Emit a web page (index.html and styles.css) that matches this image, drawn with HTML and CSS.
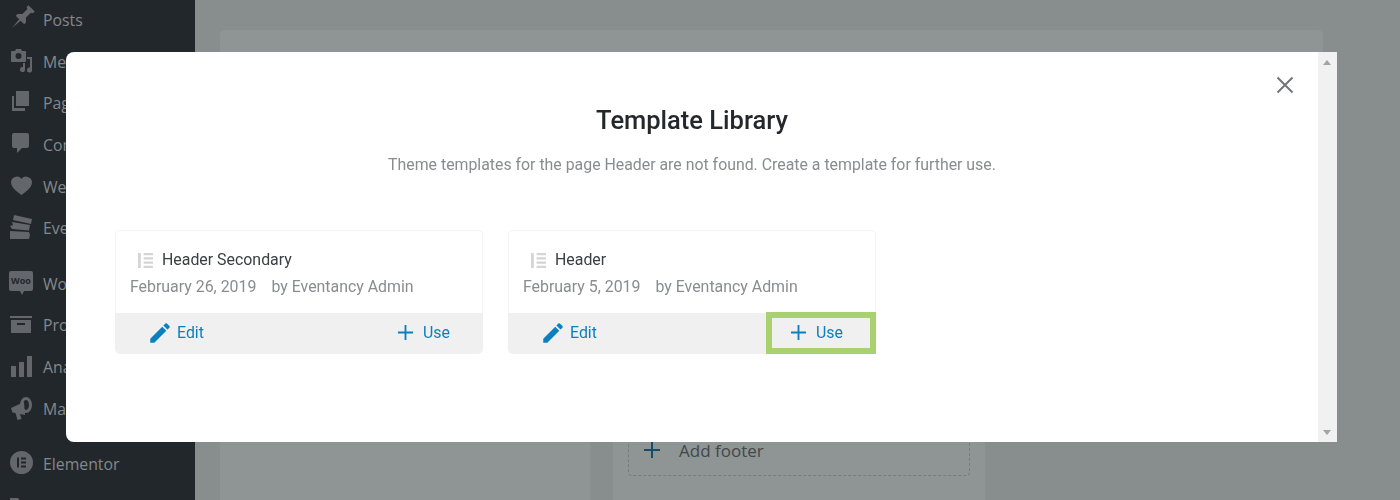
FILE: index.html
```html
<!DOCTYPE html>
<html lang="en">
<head>
  <meta charset="UTF-8">
  <title>Template Library</title>
  <link rel="stylesheet" href="styles.css">
</head>
<body>
  <div class="admin">
    <nav class="side-menu">
      <div class="menu-group">
        <div class="menu-item">
          <svg class="menu-icon" viewBox="0 0 24 24"><path transform="translate(0 -1) rotate(45 12 12)" d="M7.500 -3h9v2.500l-2 1v7l3.500 3.500v2.500h-5l-1 11-1-11h-5v-2.500l3.500-3.500v-7l-2-1z"/></svg>
          <span>Posts</span>
        </div>
        <div class="menu-item">
          <svg class="menu-icon" viewBox="0 0 24 24"><path fill-rule="evenodd" d="M3 1h3l1-2h5l1 2h3a1 1 0 0 1 1 1v9a1 1 0 0 1-1 1H3a1 1 0 0 1-1-1V2a1 1 0 0 1 1-1zm6.500 2a3 3 0 1 0 0 6 3 3 0 0 0 0-6z"/><path d="M18 7h5v13a2.500 2.500 0 1 1-2-2.400V9h-3zM14 13h2v6.500a2.500 2.500 0 1 1-2-2.400z"/></svg>
          <span>Media</span>
        </div>
        <div class="menu-item">
          <svg class="menu-icon" viewBox="0 0 24 24"><path d="M7 0h13v15H7z"/><path d="M3 5h2v12h11v3H3z"/></svg>
          <span>Pages</span>
        </div>
        <div class="menu-item">
          <svg class="menu-icon" viewBox="0 0 24 24"><path d="M5 0h13a2 2 0 0 1 2 2v11a2 2 0 0 1-2 2h-5l-5 5v-5H5a2 2 0 0 1-2-2V2a2 2 0 0 1 2-2z"/></svg>
          <span>Comments</span>
        </div>
        <div class="menu-item">
          <svg class="menu-icon" viewBox="0 0 24 24"><path d="M12.500 20C7 16 2 12.500 2 7a6 6 0 0 1 10.500-3.300A6 6 0 0 1 23 7c0 5.500-5 9-10.500 13z"/></svg>
          <span>Wedding</span>
        </div>
        <div class="menu-item">
          <svg class="menu-icon" viewBox="0 0 24 24"><path d="M5 -1l18 4-1 5-18-4zM3 6l18 3-1 5.500-17-1.500-2-3 3-1zM1 15l19 1 1 3-1 4H1z"/></svg>
          <span>Events</span>
        </div>
      </div>
      <div class="menu-group">
        <div class="menu-item">
          <svg class="menu-icon" viewBox="0 0 24 24"><path d="M2 -1h20a2 2 0 0 1 2 2v16a2 2 0 0 1-2 2h-7l-2 4-2-4H2a2 2 0 0 1-2-2V1a2 2 0 0 1 2-2z"/><text class="woo-text" x="12" y="12" text-anchor="middle">Woo</text></svg>
          <span>WooCommerce</span>
        </div>
        <div class="menu-item">
          <svg class="menu-icon" viewBox="0 0 24 24"><path d="M1 3h22v2H1zM2 7h20v13H2zm6 3v2h8v-2z" fill-rule="evenodd"/></svg>
          <span>Products</span>
        </div>
        <div class="menu-item">
          <svg class="menu-icon" viewBox="0 0 24 24"><path d="M2 11h5v11H2zM10 7h5v15h-5zM18 1h5v21h-5z"/></svg>
          <span>Analytics</span>
        </div>
        <div class="menu-item">
          <svg class="menu-icon" viewBox="0 0 24 24"><path d="M2 11l13-6 1 13-5-1 1.500 5-4 1-2-7-3-.5z"/><path fill-rule="evenodd" d="M17 0a6 8 0 1 1 0 16 6 8 0 0 1 0-16zm0 3a3 5 0 1 0 0 10 3 5 0 0 0 0-10z"/></svg>
          <span>Marketing</span>
        </div>
      </div>
      <div class="menu-group">
        <div class="menu-item">
          <svg class="menu-icon" viewBox="0 0 24 24"><path fill-rule="evenodd" d="M12.500 -1a11.500 11.500 0 1 1 0 23 11.500 11.500 0 0 1 0-23zM8 5.500v10h2v-10zm4 0v2h5v-2zm0 4v2h5v-2zm0 4v2h5v-2z"/></svg>
          <span>Elementor</span>
        </div>
        <div class="menu-item">
          <svg class="menu-icon" viewBox="0 0 24 24"><path d="M1 4h8l2 3h12v14H1z"/></svg>
          <span>Templates</span>
        </div>
      </div>
    </nav>

    <main class="content">
      <div class="top-panel"></div>
      <div class="builder-row">
        <div class="builder-col"></div>
        <div class="builder-col">
          <div class="add-box">
            <svg class="add-plus" viewBox="0 0 16 16"><path d="M7 0h2v7h7v2H9v7H7V9H0V7h7z"/></svg>
            <span>Add footer</span>
          </div>
        </div>
      </div>
    </main>
  </div>

  <div class="overlay"></div>

  <div class="modal">
    <div class="modal-body">
      <svg class="close-icon" viewBox="0 0 18 18"><path d="M1.500 1.500l15 15M16.500 1.500l-15 15"/></svg>
      <h1 class="modal-title">Template Library</h1>
      <p class="modal-text">Theme templates for the page Header are not found. Create a template for further use.</p>

      <div class="template-list">
        <div class="template-card">
          <div class="card-info">
            <div class="card-name">
              <svg class="doc-icon" viewBox="0 0 16 16"><path d="M0 0h3v16H0zM6 0h10v2.500H6zM6 4.500h10V7H6zM6 9h10v2.500H6zM6 13.500h10V16H6z"/></svg>
              <span>Header Secondary</span>
            </div>
            <div class="card-meta"><span>February 26, 2019</span><span>by Eventancy Admin</span></div>
          </div>
          <div class="card-actions">
            <a class="card-btn">
              <svg class="pencil-icon" viewBox="0 0 24 24"><path d="M3 17.250V21h3.750L17.810 9.940l-3.750-3.750L3 17.250zM20.710 7.040a1 1 0 0 0 0-1.410l-2.340-2.340a1 1 0 0 0-1.410 0l-1.830 1.830 3.750 3.750 1.830-1.830z"/></svg>
              Edit
            </a>
            <a class="card-btn">
              <svg class="plus-icon" viewBox="0 0 16 16"><path d="M7 0h2v7h7v2H9v7H7V9H0V7h7z"/></svg>
              Use
            </a>
          </div>
        </div>

        <div class="template-card">
          <div class="card-info">
            <div class="card-name">
              <svg class="doc-icon" viewBox="0 0 16 16"><path d="M0 0h3v16H0zM6 0h10v2.500H6zM6 4.500h10V7H6zM6 9h10v2.500H6zM6 13.500h10V16H6z"/></svg>
              <span>Header</span>
            </div>
            <div class="card-meta"><span>February 5, 2019</span><span>by Eventancy Admin</span></div>
          </div>
          <div class="card-actions">
            <a class="card-btn">
              <svg class="pencil-icon" viewBox="0 0 24 24"><path d="M3 17.250V21h3.750L17.810 9.940l-3.750-3.750L3 17.250zM20.710 7.040a1 1 0 0 0 0-1.410l-2.340-2.340a1 1 0 0 0-1.410 0l-1.830 1.830 3.750 3.750 1.830-1.830z"/></svg>
              Edit
            </a>
            <a class="card-btn card-btn-marked">
              <svg class="plus-icon" viewBox="0 0 16 16"><path d="M7 0h2v7h7v2H9v7H7V9H0V7h7z"/></svg>
              Use
            </a>
          </div>
        </div>
      </div>
    </div>
    <div class="modal-scroll">
      <span class="arrow-up"></span>
      <span class="arrow-down"></span>
    </div>
  </div>
</body>
</html>
```

FILE: styles.css
```css
html, body {
  margin: 0; padding: 0;
  height: 100%;
  overflow: hidden;
  font-family: Roboto, 'Liberation Sans', sans-serif;
}
.admin {
  display: flex;
  height: 500px;
  background: #f1f1f1;
  overflow: hidden;
}

/* left menu, stays dark under the overlay */
.side-menu {
  width: 195px;
  flex: none;
  background: #22272b;
  color: #85888b;
  font-family: 'Open Sans', sans-serif;
  font-size: 15.800px;
  position: relative;
  z-index: 2;
  padding-top: 0;
  margin-top: -0.600px;
}
.menu-group { margin-bottom: 14px; }
.menu-item {
  height: 41.600px;
  display: flex;
  align-items: center;
  gap: 10px;
  padding-left: 9px;
  white-space: nowrap;
}
.menu-icon {
  width: 24px; height: 24px;
  flex: none;
  fill: #63666a;
  overflow: visible;
}
.woo-text {
  font-size: 9px;
  font-weight: bold;
  fill: #22272b;
  font-family: 'Open Sans', sans-serif;
}

.content {
  flex: 1;
  padding: 30px 77px 0 25px;
  min-width: 0;
}
.top-panel {
  height: 140px;
  background: #fff;
  border-radius: 5px;
}
.builder-row {
  display: flex;
  gap: 23px;
  padding-top: 20px;
}
.builder-col {
  width: 370px;
  height: 330px;
  background: #fff;
  flex: none;
  padding: 234px 15px 0;
  box-sizing: border-box;
}
.builder-col + .builder-col { width: 372px; }
.add-box {
  height: 50px;
  border: 1px dashed #cdcdcd;
  border-radius: 4px;
  display: flex;
  align-items: center;
  gap: 19px;
  padding: 0 15px;
  font-family: 'Open Sans', sans-serif;
  font-size: 17px;
  color: #666;
}
.add-plus { width: 16px; height: 16px; fill: #0a6fa6; }

.overlay {
  position: fixed;
  top: 0; left: 0; right: 0; bottom: 0;
  background: rgba(32, 41, 44, 0.5);
  z-index: 1;
}

/* modal */
.modal {
  position: fixed;
  top: 52px; left: 66px;
  width: 1271px; height: 390px;
  display: flex;
  background: #fff;
  border-radius: 8px 0 0 8px;
  overflow: hidden;
  z-index: 3;
}
.modal-body {
  flex: 1;
  position: relative;
  padding: 50px 49px 0;
  min-width: 0;
}
.close-icon {
  position: absolute;
  top: 24px; right: 24px;
  width: 18px; height: 18px;
  fill: none;
  stroke: #73767a;
  stroke-width: 2;
}
.modal-title {
  margin: 0;
  font-size: 25.500px;
  line-height: 36px;
  font-weight: 500;
  color: #23282d;
  text-align: center;
}
.modal-text {
  margin: 17px 0 0;
  font-size: 15.870px;
  line-height: 20px;
  color: #8a8c8f;
  text-align: center;
}
.template-list {
  display: flex;
  gap: 25px;
  margin-top: 55px;
}
.template-card {
  width: 368px;
  box-sizing: border-box;
}
.card-info {
  height: 83px;
  padding: 19px 14px 0;
  box-sizing: border-box;
  border: 1px solid #f4f4f4;
  border-bottom: none;
  border-radius: 5px 5px 0 0;
}
.card-name {
  display: flex;
  align-items: center;
  gap: 9px;
  padding-left: 8px;
  font-size: 15.900px;
  line-height: 20px;
  color: #3c4043;
}
.doc-icon { width: 15px; height: 15px; fill: #d5d5d5; flex: none; }
.card-meta {
  display: flex;
  gap: 15px;
  margin-top: 7px;
  font-size: 15.900px;
  line-height: 20px;
  color: #8a8c8f;
}
.card-actions {
  height: 41px;
  display: flex;
  justify-content: space-between;
  background: #f0f0f0;
  border-radius: 0 0 5px 5px;
}
.card-btn {
  display: flex;
  align-items: center;
  gap: 4px;
  padding: 0 0 2px 32px;
  font-size: 15.900px;
  color: #0a80c0;
}
.card-btn:last-child { padding: 0 33px 2px 0; gap: 10px; }
.card-btn.card-btn-marked {
  padding: 0 0 1px 19px;
  width: 110px;
  height: 42px;
  box-sizing: border-box;
  border: 6px solid #a9d16f;
  margin-top: -1px;
}
.pencil-icon { width: 26px; height: 26px; fill: #0a80c0; }
.plus-icon { width: 15px; height: 15px; fill: #0a80c0; }

.modal-scroll {
  width: 19px;
  flex: none;
  background: #f1f1f1;
  position: relative;
}
.arrow-up, .arrow-down {
  position: absolute;
  left: 5px;
  width: 0; height: 0;
  border-left: 4px solid transparent;
  border-right: 4px solid transparent;
}
.arrow-up { top: 8px; border-bottom: 5px solid #a3a3a3; }
.arrow-down { bottom: 7px; border-top: 5px solid #a3a3a3; }
```
